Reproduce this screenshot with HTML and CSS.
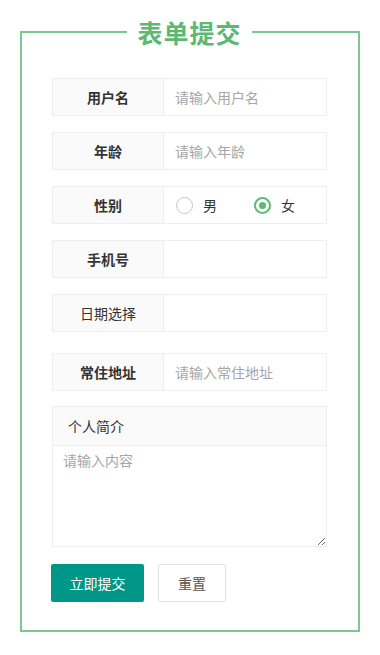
FILE: index.html
```html
<!DOCTYPE html>
<html lang="zh-CN">
<head>
<meta charset="utf-8">
<title>表单提交</title>
<link rel="stylesheet" href="styles.css">
</head>
<body>
<fieldset class="panel">
  <legend class="panel-title">表单提交</legend>
  <form class="form">
    <div class="row">
      <label class="label strong">用户名</label>
      <input class="input" type="text" placeholder="请输入用户名">
    </div>
    <div class="row">
      <label class="label strong">年龄</label>
      <input class="input" type="text" placeholder="请输入年龄">
    </div>
    <div class="row">
      <label class="label strong">性别</label>
      <div class="radios">
        <span class="radio"><span class="dot"></span><span class="radio-text">男</span></span>
        <span class="radio checked"><span class="dot"></span><span class="radio-text">女</span></span>
      </div>
    </div>
    <div class="row">
      <label class="label strong">手机号</label>
      <input class="input" type="text">
    </div>
    <div class="row">
      <label class="label">日期选择</label>
      <input class="input" type="text">
    </div>
    <div class="row row-addr">
      <label class="label strong">常住地址</label>
      <input class="input" type="text" placeholder="请输入常住地址">
    </div>
    <div class="area">
      <div class="area-head">个人简介</div>
      <textarea class="area-input" placeholder="请输入内容"></textarea>
    </div>
    <div class="actions">
      <button type="button" class="btn btn-primary">立即提交</button>
      <button type="button" class="btn btn-plain">重置</button>
    </div>
  </form>
</fieldset>
</body>
</html>
```
FILE: styles.css
```css
* { box-sizing: border-box; }
body {
  margin: 0;
  background: #fff;
  font-family: "Noto Sans CJK SC", "Noto Sans", sans-serif;
  font-size: 14px;
  color: #333;
}
.panel {
  margin: 17px 20px 0;
  width: 340px;
  min-width: 0;
  height: 615px;
  border: 2px solid #7cc890;
  padding: 31px 31px 0 30px;
}
.panel-title {
  margin: 0 auto;
  padding: 0 10px;
  font-size: 25px;
  line-height: 30px;
  font-weight: bold;
  color: #5cb872;
  letter-spacing: 1px;
}
.form {
  display: flex;
  flex-direction: column;
}
.row {
  display: flex;
  height: 38px;
  border: 1px solid #eeeeee;
  margin-bottom: 16px;
}
.row-addr { margin-top: 5px; margin-bottom: 15px; }
.label {
  width: 111px;
  flex: none;
  background: #fafafa;
  border-right: 1px solid #eeeeee;
  display: flex;
  align-items: center;
  justify-content: center;
  color: #333;
}
.label.strong { font-weight: bold; }
.input {
  flex: 1;
  width: 0;
  min-width: 0;
  border: none;
  outline: none;
  padding: 0 11px;
  font-family: inherit;
  font-size: 14px;
  color: #333;
  background: #fff;
}
.input::placeholder { color: #a6a6a6; }
.radios {
  flex: 1;
  display: flex;
  align-items: center;
  padding-left: 12px;
  gap: 37px;
}
.radio {
  display: flex;
  align-items: center;
  gap: 10px;
}
.dot {
  width: 17px;
  height: 17px;
  border-radius: 50%;
  border: 1px solid #c6c6c6;
  display: flex;
  align-items: center;
  justify-content: center;
}
.radio.checked .dot { border-color: #5fb878; border-width: 2px; }
.radio.checked .dot::after {
  content: "";
  width: 7px;
  height: 7px;
  border-radius: 50%;
  background: #5fb878;
}
.radio-text { color: #333; }
.area {
  border: 1px solid #eeeeee;
  display: flex;
  flex-direction: column;
}
.area-head {
  height: 39px;
  background: #fafafa;
  border-bottom: 1px solid #eeeeee;
  display: flex;
  align-items: center;
  padding-left: 15px;
  color: #333;
}
.area-input {
  height: 100px;
  width: 100%;
  border: none;
  outline: none;
  resize: vertical;
  padding: 4px 10px;
  font-family: inherit;
  font-size: 14px;
  color: #333;
}
.area-input::placeholder { color: #a6a6a6; }
.actions {
  display: flex;
  gap: 14px;
  margin-top: 17px;
  margin-left: -1px;
}
.btn {
  height: 38px;
  font-family: inherit;
  font-size: 14px;
  cursor: pointer;
  border-radius: 2px;
}
.btn-primary {
  width: 93px;
  background: #009688;
  color: #fff;
  border: none;
}
.btn-plain {
  width: 68px;
  background: #fff;
  color: #555;
  border: 1px solid #e2e2e2;
}
```
